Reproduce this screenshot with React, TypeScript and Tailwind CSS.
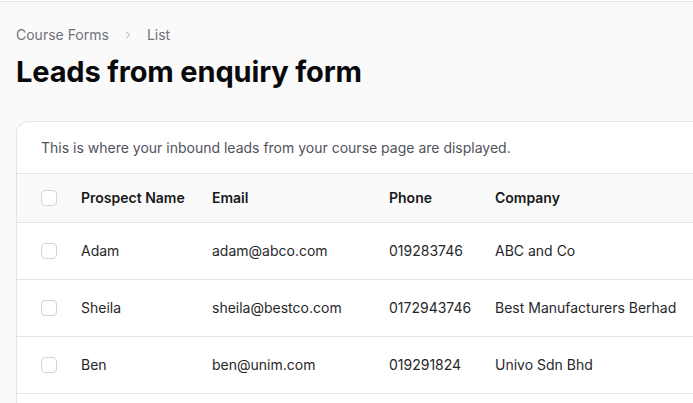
import React from "react";

const rows = [
  { name: "Adam", email: "adam@abco.com", phone: "019283746", company: "ABC and Co" },
  { name: "Sheila", email: "sheila@bestco.com", phone: "0172943746", company: "Best Manufacturers Berhad" },
  { name: "Ben", email: "ben@unim.com", phone: "019291824", company: "Univo Sdn Bhd" },
];

function Box() {
  return <div className="h-4 w-4 rounded-[4px] border border-[#d4d4d8] bg-white" />;
}

export default function App() {
  return (
    <div
      className="h-[403px] w-[693px] overflow-hidden bg-[#fafafa]"
      style={{ fontFamily: "Inter, 'Noto Sans', sans-serif" }}
    >
      <div className="h-px bg-white" />
      <div className="h-px bg-[#e4e4e7]" />
      <div className="pl-4 pt-[23px]">
        <div className="flex items-center gap-[11px] text-sm leading-5 text-[#71717a]">
          <span>Course Forms</span>
          <svg width="12" height="12" viewBox="0 0 24 24" fill="none" stroke="#9ca3af" strokeWidth="2" strokeLinecap="round" strokeLinejoin="round" className="mx-[2px]">
            <path d="m9 18 6-6-6-6" />
          </svg>
          <span>List</span>
        </div>
        <h1 className="mt-[11px] text-[29px] font-bold leading-8 tracking-[-0.005em] text-[#09090b]">
          Leads from enquiry form
        </h1>
        <div className="mt-[33px] w-[760px] rounded-xl border border-[#e4e4e7] bg-white">
          <div className="flex h-[52px] items-center border-b border-[#e4e4e7] px-6 text-sm text-[#52525b]">
            This is where your inbound leads from your course page are displayed.
          </div>
          <div className="flex h-[49px] items-center border-b border-[#e4e4e7] bg-[#fafafa] text-sm font-semibold text-[#18181b]">
            <div className="w-[64px] pl-6"><Box /></div>
            <div className="w-[131px]">Prospect Name</div>
            <div className="w-[177px]">Email</div>
            <div className="w-[106px]">Phone</div>
            <div>Company</div>
          </div>
          {rows.map((r) => (
            <div key={r.name} className="flex h-[57px] items-center border-b border-[#e4e4e7] text-sm text-[#27272a]">
              <div className="w-[64px] pl-6"><Box /></div>
              <div className="w-[131px]">{r.name}</div>
              <div className="w-[177px]">{r.email}</div>
              <div className="w-[106px]">{r.phone}</div>
              <div>{r.company}</div>
            </div>
          ))}
          <div className="h-10" />
        </div>
      </div>
    </div>
  );
}
